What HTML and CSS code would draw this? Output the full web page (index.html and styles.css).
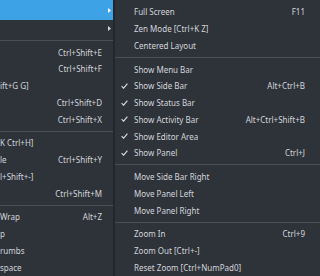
FILE: index.html
```html
<!DOCTYPE html>
<html lang="en">

<head>
    <meta charset="UTF-8">
    <meta name="viewport" content="width=device-width, initial-scale=1.0">
    <title>View menu</title>
    <link rel="stylesheet" href="styles.css">
</head>

<body>
    <div class="screen">
        <div class="menu main">
            <div class="item active"><span class="label"></span><span class="arrow"><svg width="3" height="5" viewBox="0 0 3 5"><polygon points="0,0 3,2.5 0,5" /></svg></span></div>
            <div class="item"><span class="label"></span><span class="arrow"><svg width="3" height="5" viewBox="0 0 3 5"><polygon points="0,0 3,2.5 0,5" /></svg></span></div>
            <div class="sep"></div>
            <div class="item"><span class="label"></span><span class="key">Ctrl+Shift+E</span></div>
            <div class="item"><span class="label"></span><span class="key">Ctrl+Shift+F</span></div>
            <div class="item"><span class="label">ift+G G]</span><span class="key"></span></div>
            <div class="item"><span class="label"></span><span class="key">Ctrl+Shift+D</span></div>
            <div class="item"><span class="label"></span><span class="key">Ctrl+Shift+X</span></div>
            <div class="sep"></div>
            <div class="item"><span class="label">K Ctrl+H]</span><span class="key"></span></div>
            <div class="item"><span class="label">le</span><span class="key">Ctrl+Shift+Y</span></div>
            <div class="item"><span class="label">l+Shift+-]</span><span class="key"></span></div>
            <div class="item"><span class="label"></span><span class="key">Ctrl+Shift+M</span></div>
            <div class="sep"></div>
            <div class="item"><span class="label">Wrap</span><span class="key">Alt+Z</span></div>
            <div class="item"><span class="label">p</span><span class="key"></span></div>
            <div class="item"><span class="label">rumbs</span><span class="key"></span></div>
            <div class="item"><span class="label">space</span><span class="key"></span></div>
        </div>

        <div class="menu sub">
            <div class="item"><span class="check"></span><span class="label">Full Screen</span><span class="key">F11</span></div>
            <div class="item"><span class="check"></span><span class="label">Zen Mode [Ctrl+K Z]</span></div>
            <div class="item"><span class="check"></span><span class="label">Centered Layout</span></div>
            <div class="sep"></div>
            <div class="item"><span class="check"></span><span class="label">Show Menu Bar</span></div>
            <div class="item"><span class="check"><svg width="7" height="6" viewBox="0 0 7 6"><polyline points="0.6,3.2 2.6,5.2 6.4,0.6" /></svg></span><span class="label">Show Side Bar</span><span class="key">Alt+Ctrl+B</span></div>
            <div class="item"><span class="check"><svg width="7" height="6" viewBox="0 0 7 6"><polyline points="0.6,3.2 2.6,5.2 6.4,0.6" /></svg></span><span class="label">Show Status Bar</span></div>
            <div class="item"><span class="check"><svg width="7" height="6" viewBox="0 0 7 6"><polyline points="0.6,3.2 2.6,5.2 6.4,0.6" /></svg></span><span class="label">Show Activity Bar</span><span class="key">Alt+Ctrl+Shift+B</span></div>
            <div class="item"><span class="check"><svg width="7" height="6" viewBox="0 0 7 6"><polyline points="0.6,3.2 2.6,5.2 6.4,0.6" /></svg></span><span class="label">Show Editor Area</span></div>
            <div class="item"><span class="check"><svg width="7" height="6" viewBox="0 0 7 6"><polyline points="0.6,3.2 2.6,5.2 6.4,0.6" /></svg></span><span class="label">Show Panel</span><span class="key">Ctrl+J</span></div>
            <div class="sep"></div>
            <div class="item"><span class="check"></span><span class="label">Move Side Bar Right</span></div>
            <div class="item"><span class="check"></span><span class="label">Move Panel Left</span></div>
            <div class="item"><span class="check"></span><span class="label">Move Panel Right</span></div>
            <div class="sep"></div>
            <div class="item"><span class="check"></span><span class="label">Zoom In</span><span class="key">Ctrl+9</span></div>
            <div class="item"><span class="check"></span><span class="label">Zoom Out [Ctrl+-]</span></div>
            <div class="item"><span class="check"></span><span class="label">Reset Zoom [Ctrl+NumPad0]</span></div>
        </div>
    </div>
</body>

</html>
```

FILE: styles.css
```css
* {
    margin: 0;
    padding: 0;
    box-sizing: border-box;
}
body {
    font-family: "Noto Sans", sans-serif;
    font-size: 8px;
    color: #d3d6db;
    background-color: #2e3239;
}
.screen {
    display: flex;
    height: 276px;
    overflow: hidden;
}
.menu {
    display: flex;
    flex-direction: column;
    background-color: #2e3239;
}
.main {
    width: 113px;
    flex: none;
}
.sub {
    flex: 1;
    padding-top: 3.6px;
    border-left: 2px solid #23262b;
}
.item {
    display: flex;
    align-items: center;
    height: 16.75px;
    white-space: nowrap;
}
.main .item {
    padding-right: 2px;
}
.main .item.active {
    height: 20px;
    background-color: #3ea3e6;
    color: #fff;
}
.label {
    flex: 1;
}
.key {
    padding-right: 9px;
}
.arrow {
    display: flex;
    width: 3px;
}
.arrow svg {
    fill: #d3d6db;
}
.active .arrow svg {
    fill: #fff;
}
.sub .item {
    padding-right: 15px;
}
.sub .key {
    padding-right: 0;
}
.check {
    width: 19px;
    padding-left: 6px;
    display: flex;
    align-items: center;
}
.check svg {
    fill: none;
    stroke: #d3d6db;
    stroke-width: 1.2;
}
.sep {
    height: 1px;
    margin: 3px 0;
    background-color: #4a4f57;
}
```
